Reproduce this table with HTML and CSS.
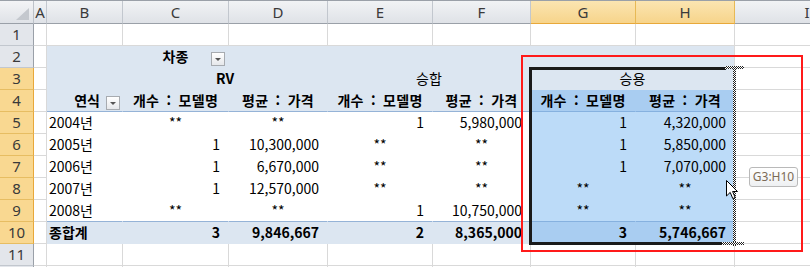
FILE: index.html
```html
<!DOCTYPE html>
<html lang="ko">
<head>
<meta charset="utf-8">
<link rel="stylesheet" href="styles.css">
</head>
<body>
<div class="sheet">
  <!-- header row -->
  <div class="corner"><div class="tri"></div></div>
  <div class="ch">A</div>
  <div class="ch">B</div>
  <div class="ch">C</div>
  <div class="ch">D</div>
  <div class="ch">E</div>
  <div class="ch">F</div>
  <div class="ch hl">G</div>
  <div class="ch hl">H</div>
  <div class="ch last">I</div>

  <!-- row 1 -->
  <div class="rh">1</div>
  <div class="c"></div><div class="c"></div><div class="c"></div><div class="c"></div><div class="c"></div><div class="c"></div><div class="c"></div><div class="c"></div><div class="c"></div>

  <!-- row 2 -->
  <div class="rh">2</div>
  <div class="c"></div>
  <div class="c pv"></div>
  <div class="c pv filt"><span class="ft b">차종</span><span class="dd"><i></i></span></div>
  <div class="c pv"></div>
  <div class="c pv"></div>
  <div class="c pv"></div>
  <div class="c pv"></div>
  <div class="c pv edge"></div>
  <div class="c"></div>

  <!-- row 3 -->
  <div class="rh hl">3</div>
  <div class="c"></div>
  <div class="c pv"></div>
  <div class="c pv span2 m b">RV</div>
  <div class="c pv span2 m">승합</div>
  <div class="c pv span2 m edge">승용</div>
  <div class="c"></div>

  <!-- row 4 -->
  <div class="rh hl">4</div>
  <div class="c"></div>
  <div class="c pvh rowlab"><span class="b">연식</span><span class="dd"><i></i></span></div>
  <div class="c pvh m b ws">개수 : 모델명</div>
  <div class="c pvh m b ws">평균 : 가격</div>
  <div class="c pvh m b ws">개수 : 모델명</div>
  <div class="c pvh m b ws">평균 : 가격</div>
  <div class="c sh m b ws">개수 : 모델명</div>
  <div class="c sh m b ws edge">평균 : 가격</div>
  <div class="c"></div>

  <!-- row 5 -->
  <div class="rh hl">5</div>
  <div class="c"></div>
  <div class="c pd l">2004년</div>
  <div class="c pd m">**</div>
  <div class="c pd m">**</div>
  <div class="c pd r">1</div>
  <div class="c pd r">5,980,000</div>
  <div class="c sd r">1</div>
  <div class="c sd r edge">4,320,000</div>
  <div class="c"></div>

  <!-- row 6 -->
  <div class="rh hl">6</div>
  <div class="c"></div>
  <div class="c pd l">2005년</div>
  <div class="c pd r">1</div>
  <div class="c pd r">10,300,000</div>
  <div class="c pd m">**</div>
  <div class="c pd m">**</div>
  <div class="c sd r">1</div>
  <div class="c sd r edge">5,850,000</div>
  <div class="c"></div>

  <!-- row 7 -->
  <div class="rh hl">7</div>
  <div class="c"></div>
  <div class="c pd l">2006년</div>
  <div class="c pd r">1</div>
  <div class="c pd r">6,670,000</div>
  <div class="c pd m">**</div>
  <div class="c pd m">**</div>
  <div class="c sd r">1</div>
  <div class="c sd r edge">7,070,000</div>
  <div class="c"></div>

  <!-- row 8 -->
  <div class="rh hl">8</div>
  <div class="c"></div>
  <div class="c pd l">2007년</div>
  <div class="c pd r">1</div>
  <div class="c pd r">12,570,000</div>
  <div class="c pd m">**</div>
  <div class="c pd m">**</div>
  <div class="c sd m">**</div>
  <div class="c sd m edge">**</div>
  <div class="c"></div>

  <!-- row 9 -->
  <div class="rh hl">9</div>
  <div class="c"></div>
  <div class="c pd lastd l">2008년</div>
  <div class="c pd lastd m">**</div>
  <div class="c pd lastd m">**</div>
  <div class="c pd lastd r">1</div>
  <div class="c pd lastd r">10,750,000</div>
  <div class="c sd lastd m">**</div>
  <div class="c sd lastd m edge">**</div>
  <div class="c"></div>

  <!-- row 10 -->
  <div class="rh hl">10</div>
  <div class="c"></div>
  <div class="c pt l b">종합계</div>
  <div class="c pt r b">3</div>
  <div class="c pt r b">9,846,667</div>
  <div class="c pt r b">2</div>
  <div class="c pt r b">8,365,000</div>
  <div class="c st r b">3</div>
  <div class="c st r b edge">5,746,667</div>
  <div class="c"></div>

  <!-- row 11 -->
  <div class="rh">11</div>
  <div class="c"></div><div class="c"></div><div class="c"></div><div class="c"></div><div class="c"></div><div class="c"></div><div class="c"></div><div class="c"></div><div class="c"></div>

  <!-- row 12 (only its top edge is in view) -->
  <div class="rh"></div>
  <div class="c"></div><div class="c"></div><div class="c"></div><div class="c"></div><div class="c"></div><div class="c"></div><div class="c"></div><div class="c"></div><div class="c"></div>

  <!-- overlays -->
  <div class="selbox"></div>
  <div class="drag dragv"></div>
  <div class="drag dragt"></div>
  <div class="drag dragb"></div>
  <div class="redbox"></div>
  <div class="tip">G3:H10</div>
  <svg class="cursor" width="13" height="20" viewBox="0 0 13 20">
    <path d="M0.5 0.5 L0.5 16 L4.2 12.4 L6.8 18.6 L9.2 17.6 L6.6 11.5 L11.5 11.5 Z" fill="#fff" stroke="#000" stroke-width="1" stroke-linejoin="miter"/>
  </svg>
</div>
</body>
</html>
```

FILE: styles.css
```css
* { box-sizing: border-box; }
html, body { margin: 0; padding: 0; background: #fff; overflow: hidden; }
body { width: 810px; height: 267px; }

.sheet {
  position: relative;
  display: grid;
  grid-template-columns: 34px 13px 76px 106px 99px 105px 98px 105px 99px 144px;
  grid-template-rows: 23px repeat(12, 22px);
  width: 879px;
  height: 267px;
  font-family: "Noto Sans CJK KR", "Noto Sans", sans-serif;
  font-size: 14px;
  color: #000;
  border-top: 1px solid #9aa0a8;
}

/* headers */
.corner {
  background: linear-gradient(#f3f4f6, #dfe2e7);
  border-right: 1px solid #bdc2c9;
  border-bottom: 1px solid #9aa0a8;
  display: flex;
  justify-content: flex-end;
  align-items: flex-end;
  padding: 0 4px 3px 0;
}
.tri {
  width: 13px;
  height: 12px;
  background: #c4c8ce;
  clip-path: polygon(100% 0, 100% 100%, 0 100%);
}
.ch {
  font-family: "Noto Sans", sans-serif;
  font-size: 15px;
  color: #3a3a3a;
  background: linear-gradient(#f1f3f5, #dfe2e7);
  border-right: 1px solid #c2c7ce;
  border-bottom: 1px solid #9aa0a8;
  display: flex;
  align-items: center;
  justify-content: center;
  line-height: 1;
}
.ch.last { border-right: none; }
.ch.hl {
  background: linear-gradient(#fbe5b1, #f7d48b);
  border-right-color: #e7b955;
  border-bottom: 1px solid #e8a83a;
}
.rh {
  font-family: "Noto Sans", sans-serif;
  font-size: 15px;
  color: #3a3a3a;
  background: #e3e6eb;
  border-right: 1px solid #9aa0a8;
  border-bottom: 1px solid #c2c7ce;
  display: flex;
  align-items: center;
  justify-content: center;
  line-height: 1;
}
.rh.hl {
  background: #f9d891;
  border-right: 1px solid #e8a83a;
  border-bottom-color: #e7bd62;
}

/* cells */
.c {
  border-right: 1px solid #d9d9d9;
  border-bottom: 1px solid #d9d9d9;
  line-height: 21px;
  white-space: nowrap;
  overflow: visible;
}
.span2 { grid-column: span 2; }
.pv { background: #dce6f1; border-color: #dce6f1; }
.pvh { background: #dce6f1; border-right-color: #dce6f1; border-bottom-color: #95b3d7; }
.pd { background: #fff; border-color: #fff; }
.pd.lastd { border-bottom-color: #95b3d7; }
.pt { background: #dce6f1; border-color: #dce6f1; }
.sh { background: #a9cdf1; border-right-color: #a9cdf1; border-bottom-color: #86b1df; }
.sd { background: #bcdbf8; border-color: #bcdbf8; }
.sd.lastd { border-bottom-color: #86b1df; }
.st { background: #a9cdf1; border-color: #a9cdf1; }
.edge { border-right-color: #d9d9d9; }

.l { padding-left: 2px; }
.r { text-align: right; padding-right: 8px; }
.m { text-align: center; }
.b { font-weight: 700; }
.ws { word-spacing: 3px; letter-spacing: 0.3px; }

.filt {
  display: flex;
  align-items: center;
  padding-left: 17px;
  padding-right: 3px;
}
.filt .ft { flex: 1; text-align: center; }
.rowlab {
  display: flex;
  justify-content: flex-end;
  align-items: center;
  gap: 6px;
  padding-right: 2px;
}
.dd {
  align-self: flex-end;
  margin-bottom: 1px;
  width: 14px;
  height: 14px;
  border: 1px solid #a7abb0;
  background: linear-gradient(#ffffff, #e6e8eb);
  display: flex;
  align-items: center;
  justify-content: center;
}
.dd i {
  width: 0;
  height: 0;
  border-left: 3px solid transparent;
  border-right: 3px solid transparent;
  border-top: 3px solid #555;
}

/* overlays */
.selbox {
  position: absolute;
  left: 529px;
  top: 66px;
  width: 197px;
  height: 178px;
  border-left: 3px solid #1a1a1a;
  border-top: 3px solid #1a1a1a;
  border-bottom: 3px solid #1a1a1a;
}
.drag {
  position: absolute;
  background: repeating-conic-gradient(#222 0 25%, #fff 0 50%) 0 0 / 2px 2px;
}
.dragv { left: 733px; top: 65px; width: 3px; height: 180px; }
.dragt { left: 725px; top: 65px; width: 19px; height: 3px; }
.dragb { left: 722px; top: 241px; width: 22px; height: 3px; }
.redbox {
  position: absolute;
  left: 521px;
  top: 54px;
  width: 282px;
  height: 197px;
  border: 2px solid #ff1a1a;
}
.tip {
  position: absolute;
  left: 749px;
  top: 166px;
  width: 49px;
  height: 20px;
  border: 1px solid #b9b9b9;
  border-radius: 3px;
  background: linear-gradient(#ffffff, #eef0f2);
  font-family: "Noto Sans", sans-serif;
  font-size: 12px;
  line-height: 18px;
  text-align: center;
  color: #7b6a55;
}
.cursor { position: absolute; left: 726px; top: 179px; }
```
